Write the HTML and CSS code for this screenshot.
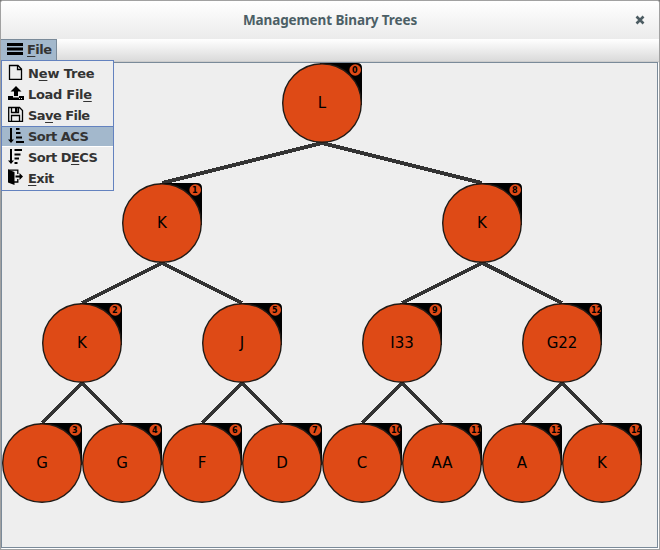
FILE: index.html
```
<!DOCTYPE html>
<html lang="en">
<head>
<meta charset="utf-8">
<title>Management Binary Trees</title>
<link rel="stylesheet" href="styles.css">
</head>
<body>
<div class="window">
  <header class="titlebar">
    <span class="title">Management Binary Trees</span>
    <svg class="close" width="10" height="10" viewBox="0 0 10 10"><path d="M1.500 1.500L8.500 8.500M8.500 1.500L1.500 8.500"/></svg>
  </header>
  <nav class="menubar">
    <div class="menu-button">
      <svg width="16" height="16" viewBox="0 0 16 16"><path d="M0 2h16v3H0zM0 6.500h16v3H0zM0 11h16v3H0z"/></svg>
      <span><u>F</u>ile</span>
    </div>
    <ul class="menu">
      <li class="wide"><svg width="16" height="16" viewBox="0 0 16 16"><path class="line" d="M1.5 1.5H10L13.5 5V15.3H1.5zM9.5 1.5V5.5H13.5"/></svg><span>N<u>e</u>w Tree</span></li>
      <li class="medium"><svg width="16" height="16" viewBox="0 0 16 16"><path d="M8 1L13.5 6.5H10V11H6V6.5H2.5zM0 11H5V12.5H11V11H16V15H0z"/><path class="dots" d="M11 13h1v1h-1zM13 13h1v1h-1z"/></svg><span>Load Fil<u>e</u></span></li>
      <li><svg width="16" height="16" viewBox="0 0 16 16"><path class="line" d="M.7 1.5H11.5L14.5 4.5V15.3H.7zM3.5 1.5V6.5H10.5V1.5M3.5 15V9.5H11.5V15"/><path d="M7 2h2.5v4H7z"/></svg><span>Sa<u>v</u>e File</span></li>
      <li class="selected"><svg width="16" height="16" viewBox="0 0 16 16"><path d="M2 1h2v11.5h2L3 16L0 12.5h2zM8 1h3.5v2H8zM8 5h4.5v2H8zM8 9.5h6v2H8zM8 14h8v2H8z"/></svg><span>Sort ACS</span></li>
      <li><svg width="16" height="16" viewBox="0 0 16 16"><path d="M2 1h2v11.5h2L3 16L0 12.5h2zM6.5 1H14v2H6.5zM6.5 5.5h6v2h-6zM6.5 9.5H11v2H6.5zM6.5 14h3v2h-3z"/></svg><span>Sort D<u>E</u>CS</span></li>
      <li><svg width="16" height="16" viewBox="0 0 16 16"><path d="M0 .5L6.5 3V16L0 13.5z"/><path class="line" d="M0 1.2H9.8V5M9.8 10V13H6"/><path d="M7.5 6.5h4V4L15 7.5L11.5 11V8.5H7.5z"/></svg><span><u>E</u>xit</span></li>
    </ul>
  </nav>
  <main class="canvas">
    <svg class="tree" width="655" height="484" viewBox="2 63 655 484">
      <defs>
        <symbol id="node" width="80" height="80" viewBox="0 0 80 80">
          <path d="M38 0H75Q80 0 80 5V42L40 40z"/>
          <circle class="disc" cx="40" cy="40" r="39.3"/>
          <circle class="badge" cx="73.2" cy="7" r="5.8"/>
        </symbol>
      </defs>
      <g class="edges">
        <path d="M162 183L322 143L482 183"/>
        <path d="M82 303L162 263L242 303M402 303L482 263L562 303"/>
        <path d="M42 423L82 383L122 423M202 423L242 383L282 423M362 423L402 383L442 423M522 423L562 383L602 423"/>
      </g>
      <svg x="282" y="63" width="80" height="80"><use href="#node"/><text x="40" y="45">L</text><text class="num" x="70" y="10">0</text></svg>
      <svg x="122" y="183" width="80" height="80"><use href="#node"/><text x="40" y="45">K</text><text class="num" x="70" y="10">1</text></svg>
      <svg x="442" y="183" width="80" height="80"><use href="#node"/><text x="40" y="45">K</text><text class="num" x="70" y="10">8</text></svg>
      <svg x="42" y="303" width="80" height="80"><use href="#node"/><text x="40" y="45">K</text><text class="num" x="70" y="10">2</text></svg>
      <svg x="202" y="303" width="80" height="80"><use href="#node"/><text x="40" y="45">J</text><text class="num" x="70" y="10">5</text></svg>
      <svg x="362" y="303" width="80" height="80"><use href="#node"/><text x="40" y="45">I33</text><text class="num" x="70" y="10">9</text></svg>
      <svg x="522" y="303" width="80" height="80"><use href="#node"/><text x="40" y="45">G22</text><text class="num" x="69" y="10">12</text></svg>
      <svg x="2" y="423" width="80" height="80"><use href="#node"/><text x="40" y="45">G</text><text class="num" x="70" y="10">3</text></svg>
      <svg x="82" y="423" width="80" height="80"><use href="#node"/><text x="40" y="45">G</text><text class="num" x="70" y="10">4</text></svg>
      <svg x="162" y="423" width="80" height="80"><use href="#node"/><text x="40" y="45">F</text><text class="num" x="70" y="10">6</text></svg>
      <svg x="242" y="423" width="80" height="80"><use href="#node"/><text x="40" y="45">D</text><text class="num" x="70" y="10">7</text></svg>
      <svg x="322" y="423" width="80" height="80"><use href="#node"/><text x="40" y="45">C</text><text class="num" x="69" y="10">10</text></svg>
      <svg x="402" y="423" width="80" height="80"><use href="#node"/><text x="40" y="45">AA</text><text class="num" x="69" y="10">11</text></svg>
      <svg x="482" y="423" width="80" height="80"><use href="#node"/><text x="40" y="45">A</text><text class="num" x="69" y="10">13</text></svg>
      <svg x="562" y="423" width="80" height="80"><use href="#node"/><text x="40" y="45">K</text><text class="num" x="69" y="10">14</text></svg>
    </svg>
  </main>
</div>
</body>
</html>
```
FILE: styles.css
```
* { box-sizing: border-box; }
body { margin: 0; background: #777; }
.window {
  width: 660px;
  height: 550px;
  display: flex;
  flex-direction: column;
  border: 1px solid #a1a1a1;
  border-radius: 3px 3px 0 0;
  background: #eee;
  overflow: hidden;
}
.titlebar {
  height: 38px;
  flex: none;
  display: grid;
  grid-template-columns: 24px 1fr 24px;
  align-items: center;
  background: linear-gradient(#fff, #ebebeb);
}
.title {
  grid-column: 2;
  text-align: center;
  font: bold 13.5px "Noto Sans", sans-serif;
  color: #4c5f66;
  letter-spacing: -0.1px;
}
.close { stroke: #4c5c62; stroke-width: 2.6; fill: none; }
.menubar {
  position: relative;
  height: 23px;
  flex: none;
  display: flex;
  background: linear-gradient(#fff, #dadada);
  border-bottom: 1px solid #ccc;
  font: bold 13px "DejaVu Sans", sans-serif;
  color: #333;
}
.menu-button {
  width: 56px;
  height: 21px;
  display: flex;
  align-items: center;
  gap: 4px;
  padding: 0 0 2px 6px;
  background: #a3b8cc;
  border: solid #7a8a99;
  border-width: 1px 1px 0 0;
}
.menubar svg { flex: none; }
.menubar span { letter-spacing: -0.55px; white-space: pre; }
.menubar .wide span { letter-spacing: -0.15px; }
.menubar .medium span { letter-spacing: -0.3px; }
.menubar u { text-underline-offset: 2px; text-decoration-thickness: 1px; text-decoration-skip-ink: none; }
.menu {
  position: absolute;
  left: 0;
  top: 21px;
  width: 113px;
  height: 131px;
  margin: 0;
  padding: 2px 0;
  list-style: none;
  background: #eee;
  border: 1px solid #6382bf;
  z-index: 1;
}
.menu li {
  height: 21px;
  display: flex;
  align-items: center;
  gap: 4px;
  padding-left: 6px;
}
.menu li svg { margin-bottom: 3px; }
.menu .selected {
  background: #a3b8cc;
  box-shadow: inset 0 1px #6382bf, inset 0 -1px #fff;
}
.line { fill: none; stroke: #000; stroke-width: 1.3; }
.dots { fill: #eee; }
.canvas {
  flex: 1;
  border: 1px solid #7a8a99;
  box-shadow: 1px 1px #fff;
  margin: 0 1px 1px 0;
}
.tree { display: block; }
.edges { fill: none; stroke: #333; stroke-width: 4; shape-rendering: crispEdges; }
.disc { fill: #de4a16; stroke: #201a16; stroke-width: 1.4; }
.badge { fill: #de4a16; }
.tree text { font: 15px "DejaVu Sans", sans-serif; text-anchor: middle; }
.tree .num { font-size: 8px; font-weight: bold; text-anchor: start; }
```
